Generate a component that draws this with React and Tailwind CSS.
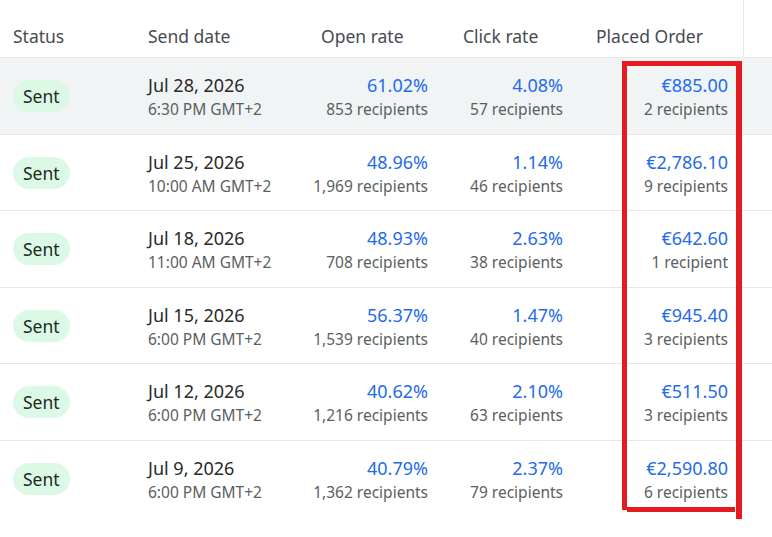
import React from 'react';

const rows = [
  { date: 'Jul 28, 2026', time: '6:30 PM GMT+2', open: '61.02%', openR: '853 recipients', click: '4.08%', clickR: '57 recipients', order: '€885.00', orderR: '2 recipients', hover: true },
  { date: 'Jul 25, 2026', time: '10:00 AM GMT+2', open: '48.96%', openR: '1,969 recipients', click: '1.14%', clickR: '46 recipients', order: '€2,786.10', orderR: '9 recipients' },
  { date: 'Jul 18, 2026', time: '11:00 AM GMT+2', open: '48.93%', openR: '708 recipients', click: '2.63%', clickR: '38 recipients', order: '€642.60', orderR: '1 recipient' },
  { date: 'Jul 15, 2026', time: '6:00 PM GMT+2', open: '56.37%', openR: '1,539 recipients', click: '1.47%', clickR: '40 recipients', order: '€945.40', orderR: '3 recipients' },
  { date: 'Jul 12, 2026', time: '6:00 PM GMT+2', open: '40.62%', openR: '1,216 recipients', click: '2.10%', clickR: '63 recipients', order: '€511.50', orderR: '3 recipients' },
  { date: 'Jul 9, 2026', time: '6:00 PM GMT+2', open: '40.79%', openR: '1,362 recipients', click: '2.37%', clickR: '79 recipients', order: '€2,590.80', orderR: '6 recipients' },
];

const cols = 'grid grid-cols-[135px_173px_142px_133px_161px_28px]';

const Metric = ({ value, sub, pad }) => (
  <div className={`flex flex-col items-end justify-center pt-[4px] ${pad}`}>
    <span className="text-[18px] leading-[24px] text-[#1f6bea]">{value}</span>
    <span className="text-[15.5px] leading-[25px] text-[#5a5f62]">{sub}</span>
  </div>
);

export default function App() {
  return (
    <div className="relative w-[772px] h-[537px] bg-white overflow-hidden" style={{ fontFamily: '"Noto Sans", "Open Sans", sans-serif' }}>
      <div className={`${cols} h-[58px] border-b border-[#e4e8ea] text-[17.5px] text-[#474c50]`}>
        <div className="flex items-center pl-[13px] pt-[16px]">Status</div>
        <div className="flex items-center pl-[13px] pt-[16px]">Send date</div>
        <div className="flex items-center pl-[13px] pt-[16px]">Open rate</div>
        <div className="flex items-center pl-[13px] pt-[16px]">Click rate</div>
        <div className="flex items-center pl-[13px] pt-[16px] border-r border-[#e4e8ea]">Placed Order</div>
        <div />
      </div>

      {rows.map((r, i) => (
        <div
          key={i}
          className={`${cols} h-[76.5px] ${i < rows.length - 1 ? 'border-b border-[#e4e8ea]' : ''} ${r.hover ? 'bg-[#f1f4f5]' : 'bg-white'}`}
        >
          <div className="flex items-center pl-[13px] pt-[1px]">
            <span className="rounded-full bg-[#dcf9e6] px-[10px] h-[32px] flex items-center text-[17.5px] text-[#1c2a22]">Sent</span>
          </div>
          <div className="flex flex-col justify-center pl-[13px] pt-[4px]">
            <span className="text-[18px] leading-[24px] text-[#2a2a2a]">{r.date}</span>
            <span className="text-[15.5px] leading-[25px] text-[#5a5f62]">{r.time}</span>
          </div>
          <Metric value={r.open} sub={r.openR} pad="pr-[22px]" />
          <Metric value={r.click} sub={r.clickR} pad="pr-[20px]" />
          <Metric value={r.order} sub={r.orderR} pad="pr-[16px]" />
          <div />
        </div>
      ))}

      {/* red highlight annotation */}
      <div className="absolute left-[622px] top-[61px] w-[120px] h-[5px] bg-[#e41c1f]" />
      <div className="absolute left-[622px] top-[61px] w-[5px] h-[449px] bg-[#e41c1f]" />
      <div className="absolute left-[736px] top-[61px] w-[6px] h-[458px] bg-[#e41c1f]" />
      <div className="absolute left-[627px] top-[507px] w-[108px] h-[5px] bg-[#e41c1f]" />
    </div>
  );
}
